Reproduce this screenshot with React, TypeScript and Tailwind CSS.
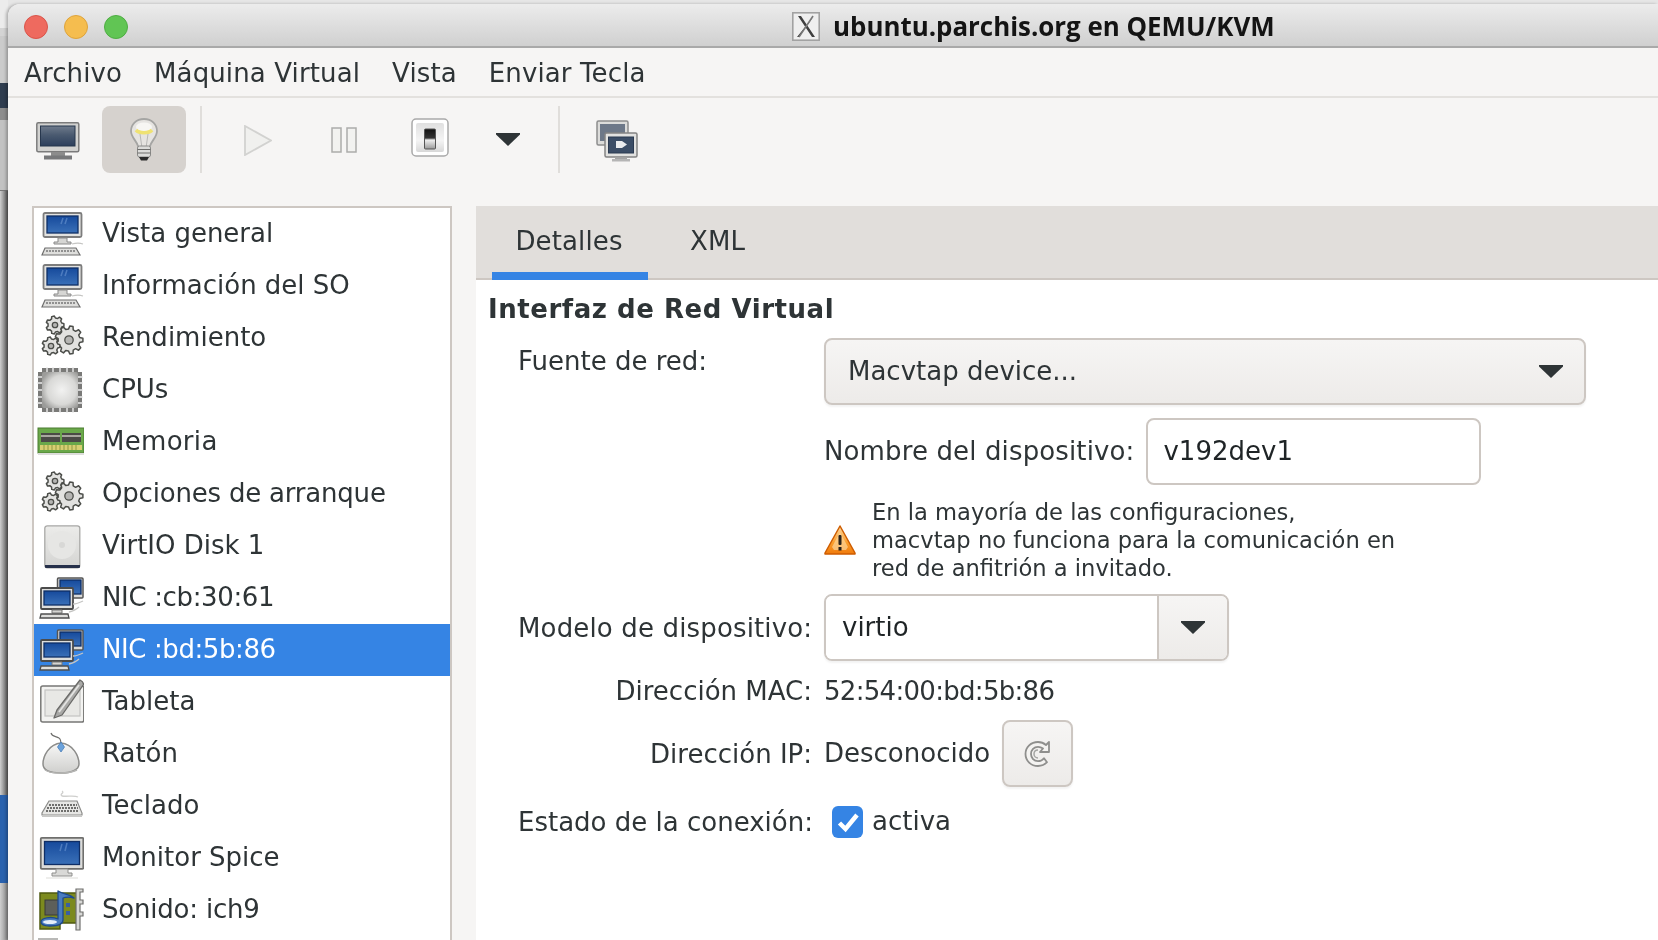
import React from "react";

const FONT = "[font-family:'DejaVu_Sans',sans-serif]";

function ToolMonitor() {
  return (
    <svg width="44" height="38" viewBox="0 0 44 38" className="mt-[3px] shrink-0">
      <defs>
        <linearGradient id="tm" x1="0" y1="0" x2="0" y2="1">
          <stop offset="0" stopColor="#6f7b8c" />
          <stop offset="0.45" stopColor="#4a5a70" />
          <stop offset="1" stopColor="#2c3f5c" />
        </linearGradient>
      </defs>
      <rect x="0.8" y="0.8" width="42" height="29" rx="1.5" fill="#d2d2d0" stroke="#7b7b7b" strokeWidth="1.5" />
      <rect x="4.5" y="4" width="34.5" height="20" fill="url(#tm)" stroke="#27374d" strokeWidth="1" />
      <rect x="15" y="30" width="14" height="4" fill="#8c8c8c" />
      <rect x="8" y="33.5" width="28" height="4" fill="#77787a" />
    </svg>
  );
}

function Bulb() {
  return (
    <svg width="30" height="44" viewBox="0 0 30 44">
      <path d="M15 1C7 1 2 6.500 2 13c0 6 5 9 7 15 .4 1.200.5 2 .5 2h11s.1-.8.5-2c2-6 7-9 7-15C28 6.500 23 1 15 1z" fill="#e6e4e1" stroke="#a5a5a3" strokeWidth="1.800" />
      <ellipse cx="15" cy="9" rx="8" ry="4.500" fill="#f7f6f3" />
      <path d="M7 12c3 3.500 13 3.500 16 0" fill="none" stroke="#efe273" strokeWidth="3.500" />
      <path d="M11 16l2 14M19 16l-2 14" stroke="#b8b8b6" strokeWidth="1" />
      <rect x="8.500" y="28" width="13" height="11" rx="2" fill="#dcdcda" stroke="#8a8a88" strokeWidth="1" />
      <path d="M8.500 31.500h13M8.500 35h13" stroke="#6f6f6d" strokeWidth="1.200" />
      <path d="M10 39h10l-2 3.500h-6z" fill="#2b2b2b" />
    </svg>
  );
}

function Play() {
  return (
    <svg width="28" height="31" viewBox="0 0 28 31" className="shrink-0 translate-y-px">
      <path d="M1 1l26 14.500L1 30z" fill="#f0f0ee" stroke="#d2d2d0" strokeWidth="1.800" />
    </svg>
  );
}

function Pause() {
  return (
    <svg width="26" height="26" viewBox="0 0 26 26" className="shrink-0">
      <rect x="1" y="1" width="9" height="24" fill="#f2f2f0" stroke="#acacaa" strokeWidth="1.500" />
      <rect x="16" y="1" width="9" height="24" fill="#f2f2f0" stroke="#acacaa" strokeWidth="1.500" />
    </svg>
  );
}

function Switch() {
  return (
    <svg width="38" height="40" viewBox="0 0 38 40" className="shrink-0">
      <defs>
        <linearGradient id="sw" x1="0" y1="0" x2="0" y2="1">
          <stop offset="0" stopColor="#e0e0e0" />
          <stop offset="0.6" stopColor="#f4f4f4" />
          <stop offset="1" stopColor="#d8d8d8" />
        </linearGradient>
        <linearGradient id="sw2" x1="0" y1="0" x2="0" y2="1">
          <stop offset="0" stopColor="#111" />
          <stop offset="0.45" stopColor="#333" />
          <stop offset="0.55" stopColor="#eee" />
          <stop offset="1" stopColor="#999" />
        </linearGradient>
      </defs>
      <rect x="1" y="1" width="36" height="37" rx="4" fill="#fff" stroke="#a9a9a9" strokeWidth="1.500" />
      <rect x="5" y="5" width="28" height="29" rx="2" fill="url(#sw)" />
      <rect x="13.500" y="11" width="11" height="20" rx="1" fill="url(#sw2)" stroke="#555" strokeWidth="1" />
    </svg>
  );
}

function Arrow({ w = 24, h = 13 }: { w?: number; h?: number }) {
  return (
    <svg width={w} height={h} viewBox="0 0 24 13" className="shrink-0">
      <path d="M0 0h24v1.500L12 13 0 1.500z" fill="#2e3436" />
    </svg>
  );
}

function Screens() {
  return (
    <svg width="42" height="42" viewBox="0 0 42 42" className="mt-[3px] shrink-0">
      <rect x="1" y="1" width="31" height="24" rx="1.500" fill="#dcdcda" stroke="#8d8d8d" strokeWidth="1.500" />
      <rect x="4" y="4" width="25" height="17" fill="#6d7888" />
      <rect x="9" y="13" width="32" height="24" rx="1.500" fill="#e2e2e0" stroke="#838383" strokeWidth="1.500" />
      <rect x="12.500" y="17" width="25" height="16" fill="#3b4d66" stroke="#2b3a50" strokeWidth="1" />
      <path d="M20 21h6l5 3.500-5 3.500h-6z" fill="#e9ebee" />
      <rect x="19" y="37" width="12" height="2" fill="#a3a3a3" />
      <rect x="16" y="39" width="18" height="2.500" fill="#b5b5b5" />
    </svg>
  );
}

function BlueScreen({ x, y, w, h, id }: { x: number; y: number; w: number; h: number; id: string }) {
  return (
    <>
      <defs>
        <linearGradient id={id} x1="0" y1="0" x2="0" y2="1">
          <stop offset="0" stopColor="#164a9c" />
          <stop offset="1" stopColor="#3a70b8" />
        </linearGradient>
      </defs>
      <rect x={x} y={y} width={w} height={h} fill={`url(#${id})`} stroke="#0f2e66" strokeWidth="1.300" />
    </>
  );
}

function Computer() {
  return (
    <svg width="48" height="48" viewBox="0 0 48 48" className="shrink-0">
      <rect x="7.500" y="3" width="38" height="24" rx="1.500" fill="#e2e2e0" stroke="#7d7d7d" strokeWidth="1.800" />
      <BlueScreen x={11} y={6} w={31} h={17} id="cpscr" />
      <path d="M27 8l-2 6M31 8l-2 6" stroke="#5f8ccb" strokeWidth="1.500" opacity="0.7" />
      <path d="M22 28h9v4h4v2H18v-2h4z" fill="#d6d6d4" stroke="#8a8a8a" strokeWidth="1" />
      <path d="M9 38h31l4 7H6z" fill="#dededc" stroke="#6f6f6f" strokeWidth="1.200" />
      <path d="M10 41h30" stroke="#777" strokeWidth="1.500" strokeDasharray="2 1" />
      <path d="M36 34c4-1 8-1 11 0" stroke="#c5c5c3" strokeWidth="1.200" fill="none" />
    </svg>
  );
}

function gearPath(cx: number, cy: number, r: number, n: number) {
  const pts: string[] = [];
  const inner = r * 0.78;
  for (let i = 0; i < n; i++) {
    const a = (i / n) * Math.PI * 2;
    const s = (Math.PI * 2) / n;
    const p = (rad: number, t: number) =>
      `${(cx + rad * Math.cos(t)).toFixed(2)},${(cy + rad * Math.sin(t)).toFixed(2)}`;
    pts.push(p(inner, a - s * 0.32), p(r, a - s * 0.17), p(r, a + s * 0.17), p(inner, a + s * 0.32));
  }
  return pts.join(" ");
}

function Gear({ cx, cy, r, n }: { cx: number; cy: number; r: number; n: number }) {
  return (
    <>
      <polygon points={gearPath(cx, cy, r, n)} fill="#e2e2e0" stroke="#4c4e4a" strokeWidth="1.500" strokeLinejoin="round" />
      <circle cx={cx} cy={cy} r={r * 0.3} fill="#b5b5b3" stroke="#4c4e4a" strokeWidth="1.300" />
    </>
  );
}

function Gears() {
  return (
    <svg width="48" height="48" viewBox="0 0 48 48" className="shrink-0">
      <Gear cx={33} cy={26} r={14} n={9} />
      <Gear cx={19} cy={11} r={9} n={7} />
      <Gear cx={15} cy={32} r={9} n={7} />
    </svg>
  );
}

function Cpu() {
  return (
    <svg width="48" height="48" viewBox="0 0 48 48" className="shrink-0">
      <defs>
        <radialGradient id="cpu" cx="0.55" cy="0.5" r="0.62">
          <stop offset="0" stopColor="#f2f2f1" />
          <stop offset="0.65" stopColor="#d8d8d6" />
          <stop offset="1" stopColor="#9c9c9a" />
        </radialGradient>
      </defs>
      <path d="M6 2h36v44H6zM2 6h44v36H2z" fill="#7a7a78" />
      <g stroke="#ececec" strokeWidth="1.400">
        <path d="M11 1v5M17 1v5M24 1v5M31 1v5M37 1v5M11 42v5M17 42v5M24 42v5M31 42v5M37 42v5M1 11h5M1 17h5M1 24h5M1 31h5M1 37h5M42 11h5M42 17h5M42 24h5M42 31h5M42 37h5" />
      </g>
      <rect x="6" y="6" width="36" height="36" rx="2" fill="url(#cpu)" />
    </svg>
  );
}

function Memory() {
  return (
    <svg width="48" height="48" viewBox="0 0 48 48" className="shrink-0">
      <rect x="2" y="10" width="46" height="25" fill="#6aa84a" stroke="#4b7d31" strokeWidth="1" />
      <rect x="5" y="15" width="19" height="9" fill="#4b4a46" />
      <rect x="26" y="15" width="19" height="9" fill="#4b4a46" />
      <rect x="5" y="17" width="19" height="2" fill="#a9a79f" />
      <rect x="26" y="17" width="19" height="2" fill="#a9a79f" />
      <rect x="4" y="27" width="42" height="5" fill="#d8cf72" />
      <path d="M8 27v5M12 27v5M16 27v5M20 27v5M24 27v5M28 27v5M32 27v5M36 27v5M40 27v5" stroke="#8f9a40" strokeWidth="1" />
      <path d="M2 36h46" stroke="#dddddb" strokeWidth="2" />
    </svg>
  );
}

function Disk() {
  return (
    <svg width="48" height="48" viewBox="0 0 48 48" className="shrink-0">
      <defs>
        <linearGradient id="dsk" x1="0" y1="0" x2="0" y2="1">
          <stop offset="0" stopColor="#ececea" />
          <stop offset="1" stopColor="#d4d4d2" />
        </linearGradient>
      </defs>
      <rect x="8.800" y="3.800" width="35" height="42" rx="2.500" fill="url(#dsk)" stroke="#a8a8a6" strokeWidth="1.300" />
      <circle cx="26" cy="23" r="14" fill="#e6e6e4" />
      <circle cx="26" cy="23" r="3" fill="#d8d8d6" />
      <path d="M9 43h35v2a1 1 0 0 1-1 1H10a1 1 0 0 1-1-1z" fill="#26304a" />
    </svg>
  );
}

function Nic() {
  return (
    <svg width="48" height="48" viewBox="0 0 48 48" className="shrink-0">
      <rect x="21.500" y="4" width="25.500" height="20" rx="1" fill="#d9d9d7" stroke="#555" strokeWidth="1.500" />
      <BlueScreen x={24} y={6} w={21} h={14} id="nicb" />
      <rect x="5" y="14" width="32" height="21" rx="1" fill="#dededc" stroke="#4b4b4b" strokeWidth="1.800" />
      <BlueScreen x={8} y={17} w={26} h={14} id="nicf" />
      <path d="M16 36h10v3H16z" fill="#d4d4d2" stroke="#777" strokeWidth="1" />
      <path d="M5 40h27l1 4H4z" fill="#dededc" stroke="#4f4f4f" strokeWidth="1.300" />
      <path d="M37 30c3 0 6-1 10-3M33 38c4-1 7-2 10-5" fill="none" stroke="#c5c5c3" strokeWidth="1.300" />
    </svg>
  );
}

function Tablet() {
  return (
    <svg width="48" height="48" viewBox="0 0 48 48" className="shrink-0">
      <rect x="4.800" y="8" width="43" height="36" rx="2" fill="#f3f3f1" stroke="#777775" strokeWidth="1.500" />
      <rect x="9" y="12" width="35" height="26" fill="#e8e8e5" stroke="#c4c4c2" strokeWidth="1.200" />
      <path d="M44 2c2 1 3.500 2.500 3.500 4.500L26 37l-8 3 3-8z" fill="#a9a9a7" stroke="#6a6a68" strokeWidth="1.300" strokeLinejoin="round" />
      <path d="M43 7L23 34" stroke="#e4e4e2" strokeWidth="1.800" />
    </svg>
  );
}

function Mouse() {
  return (
    <svg width="48" height="48" viewBox="0 0 48 48" className="shrink-0">
      <defs>
        <linearGradient id="ms" x1="0" y1="0" x2="0" y2="1">
          <stop offset="0" stopColor="#f8f8f7" />
          <stop offset="1" stopColor="#cfcfcd" />
        </linearGradient>
      </defs>
      <path d="M25 13C13 14 7 26 7 34c0 7 8 9 18 9s18-3 18-9c0-8-6-20-18-21z" fill="url(#ms)" stroke="#8c8c8a" strokeWidth="1.500" />
      <path d="M15 3c1 4 5 3 8 5 2 1 2 4 2 7" fill="none" stroke="#6f6f6d" strokeWidth="1.200" />
      <path d="M25 12l3.500 5-3.500 5-3.500-5z" fill="#6aa2dc" stroke="#4b7fb8" strokeWidth="0.800" />
      <path d="M9 40c6 4 24 4 32 0" stroke="#b5b5b3" strokeWidth="1.500" fill="none" />
    </svg>
  );
}

function Keyboard() {
  return (
    <svg width="48" height="48" viewBox="0 0 48 48" className="shrink-0">
      <path d="M26 9c3 2-3 3 0 5 5 1 12-1 16 1" fill="none" stroke="#cfcfcd" strokeWidth="1.300" />
      <path d="M13 19h28l5 12v2H6v-2z" fill="#e6e6e4" stroke="#8c8c8a" strokeWidth="1.200" />
      <path d="M13 23h28M11 26h31M10 29h33" stroke="#6f6f6d" strokeWidth="2" strokeDasharray="2 1" />
      <path d="M6 34h40" stroke="#c9c9c7" strokeWidth="2" />
    </svg>
  );
}

function Monitor() {
  return (
    <svg width="48" height="48" viewBox="0 0 48 48" className="shrink-0">
      <rect x="4.800" y="3.800" width="42.500" height="31" rx="1" fill="#dcdcda" stroke="#6f6f6d" strokeWidth="1.800" />
      <BlueScreen x={8.500} y={7.500} w={35} h={23} id="monscr" />
      <path d="M26 10l-2 7M31 9l-2 8" stroke="#5f8ccb" strokeWidth="1.500" opacity="0.7" />
      <path d="M20 35h12v4h4v3H16v-3h4z" fill="#d9d9d7" stroke="#8f8f8d" strokeWidth="1" />
      <path d="M10 44h32" stroke="#eeeeec" strokeWidth="2" />
    </svg>
  );
}

function Sound() {
  return (
    <svg width="48" height="48" viewBox="0 0 48 48" className="shrink-0">
      <path d="M4 7h37v30H24v6H4z" fill="#7c8a1e" stroke="#4f5a10" strokeWidth="1.500" />
      <rect x="9" y="14" width="14" height="15" fill="#5d5f5a" stroke="#3a3a38" strokeWidth="1" />
      <rect x="30" y="17" width="4" height="4" fill="#3a5fa0" />
      <rect x="30" y="25" width="4" height="4" fill="#3a5fa0" />
      <path d="M40 3h7v3h-3v8h3v4h-3v8h3v4h-3v14h-4z" fill="#d8d8d6" stroke="#6f6f6d" strokeWidth="1.200" />
      <path d="M22 33V5c4 3 12 3 16 7-4-1-8-1-11 0v22c0 5-7 6-13 6-6 0-9-2-9-4 0-4 10-6 17-3z" fill="#4a7cc0" stroke="#1f4a8c" strokeWidth="1.300" strokeLinejoin="round" />
      <ellipse cx="14" cy="36" rx="7" ry="2" fill="#e5eefa" />
    </svg>
  );
}

function Warning() {
  return (
    <svg width="32" height="30" viewBox="0 0 32 30" className="shrink-0">
      <defs>
        <linearGradient id="wg" x1="0" y1="0" x2="0" y2="1">
          <stop offset="0" stopColor="#fcd9a0" />
          <stop offset="0.6" stopColor="#fb9d2b" />
          <stop offset="1" stopColor="#ef7a0c" />
        </linearGradient>
      </defs>
      <path d="M16 1L31 28v1H1v-1z" fill="url(#wg)" stroke="#ce5c00" strokeWidth="1.500" strokeLinejoin="round" />
      <path d="M16 7l8 15-2 3H10l-2-3z" fill="#fdd59a" opacity="0.7" />
      <rect x="14.500" y="10" width="3" height="10" rx="1" fill="#2b2118" />
      <rect x="14.500" y="22" width="3" height="3.500" fill="#2b2118" />
    </svg>
  );
}

function Refresh() {
  return (
    <svg width="32" height="32" viewBox="0 0 32 32">
      <path d="M27 4v10h-9l3-3.500c-1.500-1.200-3-1.700-5-1.700-4 0-7 3.200-7 7.200s3 7.200 7 7.200c2.500 0 4.600-1.200 6-3l3 4c-2.300 2.500-5.400 3.800-9 3.800-7 0-12.500-5.200-12.500-12S9 4 16 4c3 0 5.700 1 8 3z" fill="#f4f3f1" stroke="#8f8f8d" strokeWidth="1.800" strokeLinejoin="round" />
      <path d="M16 12c-2.500 0-4 1.800-4 4s1.700 4 4 4" fill="none" stroke="#a5a5a3" strokeWidth="1.500" />
    </svg>
  );
}

const ROWS: { icon: React.ReactNode; label: string; selected?: boolean; track?: string }[] = [
  { icon: <Computer />, label: "Vista general" },
  { icon: <Computer />, label: "Información del SO" },
  { icon: <Gears />, label: "Rendimiento" },
  { icon: <Cpu />, label: "CPUs" },
  { icon: <Memory />, label: "Memoria", track: "tracking-[0.3px]" },
  { icon: <Gears />, label: "Opciones de arranque", track: "tracking-[-0.2px]" },
  { icon: <Disk />, label: "VirtIO Disk 1" },
  { icon: <Nic />, label: "NIC :cb:30:61", track: "tracking-[-0.35px]" },
  { icon: <Nic />, label: "NIC :bd:5b:86", selected: true, track: "tracking-[-0.4px]" },
  { icon: <Tablet />, label: "Tableta" },
  { icon: <Mouse />, label: "Ratón" },
  { icon: <Keyboard />, label: "Teclado" },
  { icon: <Monitor />, label: "Monitor Spice" },
  { icon: <Sound />, label: "Sonido: ich9", track: "tracking-[-0.2px]" },
];

function DesktopStrip() {
  return (
    <div className="flex h-[940px] w-2 shrink-0 flex-col bg-[#c4c4c4]">
      <div className="h-[28px] bg-[#ececec]" />
      <div className="h-[8px] bg-[#d4d4d4]" />
      <div className="h-[47px] bg-[#cbcbcb]" />
      <div className="h-[25px] bg-[#2f3d4f]" />
      <div className="h-[12px] bg-[#8d8d8d]" />
      <div className="h-[70px] bg-[#c2c2c2]" />
      <div className="h-px bg-[#777]" />
      <div className="h-[604px] bg-gradient-to-r from-[#cfcfcf] to-[#5c5c5c]" />
      <div className="h-[88px] bg-[#2a62ae]" />
      <div className="flex-1 bg-gradient-to-r from-[#cfcfcf] to-[#8a8a8a]" />
    </div>
  );
}

function Label({ children, left = false, className = "" }: { children: React.ReactNode; left?: boolean; className?: string }) {
  return (
    <div className={`w-[296px] shrink-0 whitespace-nowrap leading-[30px] ${left ? "pl-[2px] text-left" : "text-right"} ${className}`}>
      {children}
    </div>
  );
}

export default function App() {
  return (
    <div className={`flex h-[940px] w-[1658px] overflow-hidden bg-[#e6e6e6] text-[26px] text-[#2e3436] blur-[0.5px] ${FONT}`}>
      <DesktopStrip />
      <div className="flex min-w-0 flex-1 flex-col pt-1">
        <div className="flex min-h-0 flex-1 flex-col overflow-hidden rounded-tl-[12px] bg-[#f6f5f4] shadow-[-2px_0_3px_rgba(0,0,0,0.25)]">
          {/* Title bar */}
          <div className="flex h-[44px] shrink-0 items-center border-b-2 border-[#a9a9a9] bg-gradient-to-b from-[#ececec] to-[#d0d0d0] pl-4 pt-[3px]">
            <div className="flex gap-4">
              <span className="h-6 w-6 rounded-full border border-[#d9544a] bg-[#ee6a5f]" />
              <span className="h-6 w-6 rounded-full border border-[#dda33c] bg-[#f5bd4f]" />
              <span className="h-6 w-6 rounded-full border border-[#4ead43] bg-[#61c554]" />
            </div>
            <svg width="28" height="29" viewBox="0 0 28 29" className="ml-[664px] shrink-0">
              <rect x="0.800" y="0.800" width="26.400" height="27.400" fill="#efefef" stroke="#a2a2a2" strokeWidth="1.600" />
              <path d="M6 4l14 21h3L9 4zM22 4L7 25h-2" fill="#3f3f3f" />
              <path d="M21 4L7 25" stroke="#777" strokeWidth="1.500" />
            </svg>
            <span className="ml-[13px] whitespace-nowrap font-['Open_Sans',sans-serif] text-[25.900px] font-bold text-[#141414]">
              ubuntu.parchis.org en QEMU/KVM
            </span>
          </div>

          {/* Menu */}
          <div className="flex h-[50px] shrink-0 items-center gap-[32px] border-b-2 border-[#e3e1de] pl-4 pt-[2px] tracking-[0.12px]">
            <span>Archivo</span>
            <span>Máquina Virtual</span>
            <span>Vista</span>
            <span>Enviar Tecla</span>
          </div>

          {/* Toolbar */}
          <div className="flex h-[108px] shrink-0 items-start pt-2">
            <div className="flex h-[67px] items-center pl-[28px]">
              <ToolMonitor />
              <div className="ml-[22px] flex h-[67px] w-[84px] shrink-0 items-center justify-center rounded-lg bg-[#d6d2ce]">
                <Bulb />
              </div>
              <div className="ml-[14px] h-[67px] w-[2px] shrink-0 bg-[#e0dedb]" />
              <div className="ml-[42px]">
                <Play />
              </div>
              <div className="ml-[59px]">
                <Pause />
              </div>
              <div className="mb-[3px] ml-[54px]">
                <Switch />
              </div>
              <div className="ml-[47px]">
                <Arrow />
              </div>
              <div className="ml-[38px] h-[67px] w-[2px] shrink-0 bg-[#e0dedb]" />
              <div className="ml-[36px]">
                <Screens />
              </div>
            </div>
          </div>

          {/* Main */}
          <div className="flex min-h-0 flex-1 pl-6">
            <div className="w-[420px] shrink-0 overflow-hidden border-x-2 border-t-2 border-[#cdc7c2] bg-white">
              {ROWS.map((r) => (
                <div
                  key={r.label}
                  className={`flex h-[52px] items-center gap-[18px] pl-[2px] ${r.selected ? "bg-[#3584e4] text-white" : "text-[#2e3436]"}`}
                >
                  {r.icon}
                  <span className={`whitespace-nowrap pb-[2px] ${r.track ?? ""}`}>{r.label}</span>
                </div>
              ))}
              <div className="mt-[2px] ml-[4px] h-[2px] w-[20px] bg-[#b9b9b7]" />
            </div>

            <div className="ml-6 flex min-w-0 flex-1 flex-col bg-white">
              <div className="flex h-[74px] shrink-0 border-b-2 border-[#cdc7c2] bg-[#e1dedb] pl-4 tracking-[0.12px]">
                <div className="-mb-[2px] flex h-[74px] w-[156px] items-center justify-center border-b-[8px] border-[#3584e4] pr-[2px] pt-1">
                  Detalles
                </div>
                <div className="ml-[42px] flex h-[66px] items-center pt-1">XML</div>
              </div>

              <div className="pl-[12px] pt-[14px]">
                <div className="h-[30px] text-[26px] font-bold leading-[30px] tracking-[0.55px]">Interfaz de Red Virtual</div>
                <div className="mt-[14px] pl-[28px]">
                  <div className="flex gap-[12px]">
                    <Label left className="pt-2">Fuente de red:</Label>
                    <div className="flex h-[67px] w-[762px] items-center justify-between rounded-lg border-2 border-[#cdc7c2] bg-gradient-to-b from-[#f6f5f4] to-[#edebe9] pl-[22px] pr-[21px] shadow-[0_2px_2px_rgba(0,0,0,0.05)]">
                      <span>Macvtap device...</span>
                      <Arrow />
                    </div>
                  </div>

                  <div className="mt-[13px] flex items-center pl-[308px]">
                    <span className="whitespace-nowrap tracking-[0.13px]">Nombre del dispositivo:</span>
                    <div className="ml-[12px] flex h-[67px] w-[335px] items-center rounded-lg border-2 border-[#cdc7c2] bg-white pl-[15px] text-[#1f2426]">
                      v192dev1
                    </div>
                  </div>

                  <div className="mt-[13px] flex h-[84px] items-center gap-[16px] pl-[308px]">
                    <Warning />
                    <div className="whitespace-nowrap text-[22.600px] leading-[28px]">
                      En la mayoría de las configuraciones,
                      <br />
                      macvtap no funciona para la comunicación en
                      <br />
                      red de anfitrión a invitado.
                    </div>
                  </div>

                  <div className="mt-[12px] flex items-center gap-[12px]">
                    <Label left className="tracking-[0.15px]">Modelo de dispositivo:</Label>
                    <div className="flex h-[67px] w-[405px] items-stretch overflow-hidden rounded-lg border-2 border-[#cdc7c2] shadow-[0_2px_2px_rgba(0,0,0,0.05)]">
                      <div className="flex flex-1 items-center bg-white pl-[16px] text-[#1f2426]">virtio</div>
                      <div className="flex w-[70px] items-center justify-center border-l-2 border-[#cdc7c2] bg-gradient-to-b from-[#f6f5f4] to-[#edebe9]">
                        <Arrow />
                      </div>
                    </div>
                  </div>

                  <div className="mt-[16px] flex h-[28px] items-center gap-[12px]">
                    <Label>Dirección MAC:</Label>
                    <span className="tracking-[-0.7px]">52:54:00:bd:5b:86</span>
                  </div>

                  <div className="mt-[15px] flex items-center gap-[12px]">
                    <Label>Dirección IP:</Label>
                    <span className="whitespace-nowrap">Desconocido</span>
                    <div className="flex h-[67px] w-[71px] items-center justify-center rounded-lg border-2 border-[#cdc7c2] bg-gradient-to-b from-[#f6f5f4] to-[#edebe9] shadow-[0_2px_2px_rgba(0,0,0,0.05)]">
                      <Refresh />
                    </div>
                  </div>

                  <div className="mt-[15px] flex items-center gap-[12px]">
                    <Label left>Estado de la conexión:</Label>
                    <div className="ml-[8px] flex h-8 w-[31px] items-center justify-center rounded-md bg-[#3584e4]">
                      <svg width="24" height="22" viewBox="0 0 24 22">
                        <path d="M3.500 12l6 6L21 4" fill="none" stroke="#fff" strokeWidth="4.500" />
                      </svg>
                    </div>
                    <span className="-ml-[3px]">activa</span>
                  </div>
                </div>
              </div>
            </div>
          </div>
        </div>
      </div>
    </div>
  );
}
